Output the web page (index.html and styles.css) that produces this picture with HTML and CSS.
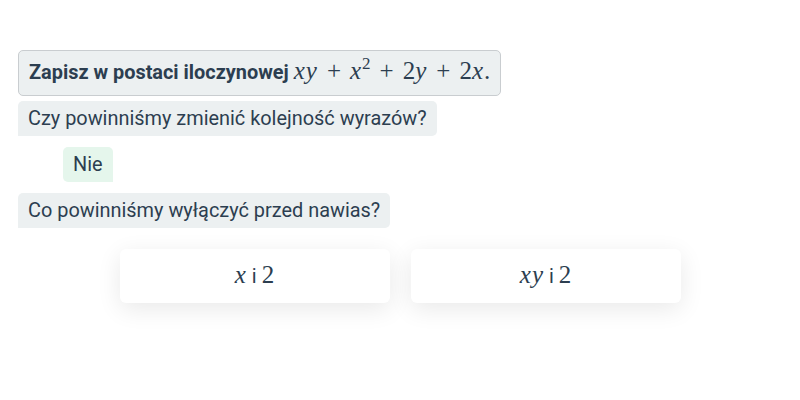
FILE: index.html
```html
<!DOCTYPE html>
<html lang="pl">
<head>
<meta charset="utf-8">
<link rel="stylesheet" href="styles.css">
</head>
<body>
<div class="chat">
  <div class="bubble bot task">Zapisz w postaci iloczynowej <span class="math"><i>xy</i><span class="op">+</span><i>x</i><sup>2</sup><span class="op">+</span>2<i>y</i><span class="op">+</span>2<i>x</i>.</span></div>
  <div class="bubble bot">Czy powinniśmy zmienić kolejność wyrazów?</div>
  <div class="bubble user">Nie</div>
  <div class="bubble bot">Co powinniśmy wyłączyć przed nawias?</div>
  <div class="choices">
    <button class="choice"><span class="math"><i>x</i></span> i <span class="math">2</span></button>
    <button class="choice"><span class="math"><i>xy</i></span> i <span class="math">2</span></button>
  </div>
</div>
</body>
</html>
```
FILE: styles.css
```css
html, body {
  margin: 0;
  background: #fff;
}
body {
  font-family: Roboto, "Noto Sans", sans-serif;
  color: #2c3e50;
  font-size: 19.9px;
}
.chat {
  padding: 50px 18px;
  display: flex;
  flex-direction: column;
  align-items: flex-start;
}
.bubble {
  background: #ecf0f1;
  border-radius: 5px 5px 5px 0;
  padding: 6px 10px;
  line-height: 23px;
  margin-bottom: 11px;
}
.task {
  font-weight: 700;
  border: 1px solid #c9cdd0;
  padding: 10px 10px;
  line-height: 24px;
  border-radius: 5px;
  margin-bottom: 5px;
}
.math {
  font-family: "Liberation Serif", "DejaVu Serif", serif;
  font-weight: 400;
  font-size: 25px;
  line-height: 0;
}
.math i {
  font-style: italic;
  letter-spacing: 1px;
}
.op {
  margin: 0 9px;
}
.math sup {
  font-size: 17px;
  line-height: 0;
  vertical-align: 10px;
}
.user {
  background: #e5f6ec;
  margin-left: 45px;
  border-radius: 5px 5px 0 5px;
}
.choices {
  align-self: stretch;
  display: flex;
  justify-content: center;
  gap: 21px;
  margin-top: 10px;
}
.choice {
  width: 270px;
  height: 54px;
  border: none;
  background: #fff;
  border-radius: 6px;
  box-shadow: 0 6px 24px rgba(0,0,0,0.09);
  font-family: Roboto, sans-serif;
  font-size: 19.9px;
  color: #2c3e50;
  padding: 0;
}
```
